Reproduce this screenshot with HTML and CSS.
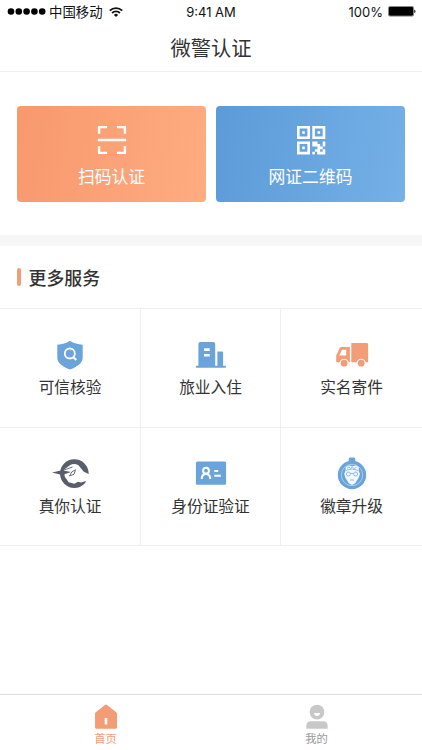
FILE: index.html
```html
<!DOCTYPE html>
<html lang="zh-CN">
<head>
  <meta charset="UTF-8">
  <meta name="viewport" content="width=device-width, initial-scale=1.0">
  <title>微警认证</title>
  <link rel="stylesheet" href="styles.css">
</head>
<body>
  <div class="status-bar">
    <div class="status-left">
      <svg class="signal" width="40" height="8" viewBox="0 0 40 8">
        <circle cx="4" cy="3.5" r="3.3"/><circle cx="11.8" cy="3.5" r="3.3"/><circle cx="19.6" cy="3.5" r="3.3"/><circle cx="27.4" cy="3.5" r="3.3"/><circle cx="35.2" cy="3.5" r="3.3"/>
      </svg>
      <span class="carrier">中国移动</span>
      <svg class="wifi" width="14" height="11" viewBox="0 0 14 11" fill="none" stroke="#111" stroke-width="1.8">
        <path d="M.8 3.6a8.8 8.8 0 0 1 12.4 0M3.1 6a5.5 5.5 0 0 1 7.8 0"/>
        <path d="M7 10 4.9 7.900a3 3 0 0 1 4.200 0z" fill="#111" stroke="none"/>
      </svg>
    </div>
    <div class="status-time">9:41 AM</div>
    <div class="status-right">
      <span>100%</span>
      <svg width="28" height="12" viewBox="0 0 28 12">
        <rect x=".5" y=".5" width="25" height="9.6" rx="1.5" fill="#000" stroke="#888"/>
        <path d="M26.300 3.500c1.600.5 1.600 3.200 0 3.700z"/>
      </svg>
    </div>
  </div>

  <header class="nav-header"><h1>微警认证</h1></header>

  <div class="cards">
    <button class="card card-scan">
      <svg width="30" height="30" viewBox="0 0 30 30" fill="none" stroke="#fff" stroke-width="2.400">
        <path d="M2.100 8.700V2.100h8M19.900 2.100h8v6.600M2.100 21v6.900h8M19.900 27.900h8V21M.8 15h28.400"/>
      </svg>
      <span>扫码认证</span>
    </button>
    <button class="card card-code">
      <svg width="30" height="30" viewBox="0 0 30 30" fill="#fff">
        <path fill-rule="evenodd" d="M1 1h13v13H1zM3.600 3.600v7.800h7.800V3.600zM16.300 1h13v13h-13zM18.900 3.600v7.800h7.800V3.600zM1 16.400h13v13H1zM3.600 19v7.800h7.800V19z"/>
        <path d="M6.200 6.200h2.600v2.600H6.200zM21.500 6.200h2.600v2.600h-2.600zM6.200 21.600h2.600v2.600H6.200z"/>
        <path d="M16.300 16.400h5.200v2.600h2.700v2.500h2.500v-5.100h2.600v5.200h-2.600v2.600h-2.600v2.600h2.600v-2.600h2.600v5.200h-8.100v-2.600h-2.300v-2.600h2.500v-2.600h-5.100z"/>
        <path d="M16.300 26.800h2.600v2.600h-2.600z"/>
      </svg>
      <span>网证二维码</span>
    </button>
  </div>

  <section class="services">
    <h2>更多服务</h2>
    <div class="grid">
      <div class="item">
        <svg width="32" height="32" viewBox="0 0 32 32">
          <path d="M16 1.700c3.800 2.600 7.700 3.500 12.700 4.100v12.400c0 6.200-5.100 9-12.700 12.400C8.400 27.200 3.300 24.400 3.300 18.200V5.800C8.300 5.200 12.200 4.300 16 1.700z" fill="#6ba4da"/>
          <circle cx="15.800" cy="14.500" r="5" fill="none" stroke="#fff" stroke-width="1.800"/>
          <path d="m19.200 18 3 3" stroke="#fff" stroke-width="2"/>
        </svg>
        <span>可信核验</span>
      </div>
      <div class="item">
        <svg width="32" height="32" viewBox="0 0 32 32" fill="#6ba4da">
          <path fill-rule="evenodd" d="M.9 26.700h2.500V4.900q0-1.800 1.800-1.800h13.200q1.800 0 1.800 1.800v21.800h2.200V12.400h4.700q1 0 1 1v13.300h2.700v2H.9zM9 9.300v2.600h5.700V9.300zM9 15v2.600h5.700V15z"/>
        </svg>
        <span>旅业入住</span>
      </div>
      <div class="item">
        <svg width="34" height="32" viewBox="0 0 34 32" fill="#f39c75">
          <path fill-rule="evenodd" d="M16.300 4.100h15.600q1.200 0 1.200 1.200v18h-2.300a4.700 4.700 0 0 0-9.100 0h-5.400zM14.900 8v15.300h-1.200a4.700 4.700 0 0 0-9.100 0H1.200v-6.900L4.600 9.200Q5.200 8 6.400 8zM11.200 10.800H7.100l-2.900 5.800h7z"/>
          <circle cx="9.100" cy="24.200" r="3.400"/><circle cx="26.200" cy="24.200" r="3.400"/>
        </svg>
        <span>实名寄件</span>
      </div>
      <div class="item">
        <svg width="38" height="32" viewBox="0 0 38 32">
          <circle cx="23.300" cy="15.600" r="14.300" fill="#5a5e6c"/>
          <!-- hand reaching in over the disc -->
          <path d="M12.800 11.800 19.300 7q3.700-2.200 8.200.2l5 6.300 5.900 3-1 7.300-3.400-.6-3.900 1.400-3-.9-3.800 2.100-5.600-1.600-3.900-5.500z" fill="#fff"/>
          <path d="M1 14.500 11 12.200 20 13.900 11 16.900z" fill="#5a5e6c"/>
          <path d="M12 12.400 21.500 9M18.500 18l4.500-1.700 1.500-4.500-3.600 2z" fill="none" stroke="#5a5e6c" stroke-width=".9"/>
        </svg>
        <span>真你认证</span>
      </div>
      <div class="item">
        <svg width="32" height="32" viewBox="0 0 32 32">
          <rect x=".9" y="3.600" width="30.200" height="23.200" rx="1.500" fill="#6ba4da"/>
          <g fill="none" stroke="#fff" stroke-width="2">
            <circle cx="11" cy="12.700" r="2.900"/>
            <path d="M6.700 21q.1-5.100 4.300-5.100t4.300 5.100M19.300 13.100h3.900M19.300 17.700h6.600"/>
          </g>
        </svg>
        <span>身份证验证</span>
      </div>
      <div class="item">
        <svg width="32" height="34" viewBox="0 0 32 34">
          <rect x="12.700" y=".6" width="6.600" height="6" rx="1.500" fill="#6ba4da"/>
          <circle cx="16" cy="18" r="14.200" fill="#6ba4da"/>
          <circle cx="16" cy="18" r="10.700" fill="none" stroke="#b7d5ef" stroke-width=".8"/>
          <path d="M9.700 10 13 8.600l3 .7 4-.8 2.800 1.700v4.300l1.200 2.300-1.300 4-3.500 5.400-3.200 1.700-3.200-1.700-3.400-5.400-1.200-4 1.100-2.300z" fill="#f2f8fc"/>
          <g fill="none" stroke="#85b5e2" stroke-width=".9">
            <path d="M9.500 13.400q6.500-2.800 13 0M11 11.400l2-1.500 1.300 1.700 2-1.600 1.800 1.700 2.400-1.500M14.800 16.500h2.400M14 23h4"/>
            <circle cx="12.400" cy="17" r="2"/><circle cx="19.600" cy="17" r="2"/>
          </g>
        </svg>
        <span>徽章升级</span>
      </div>
    </div>
  </section>

  <nav class="tab-bar">
    <a class="tab active">
      <svg width="24" height="26" viewBox="0 0 24 26" fill="currentColor">
        <path fill-rule="evenodd" d="M10.900 1q1.100-.8 2.200 0l9.100 7.200q.8.700.8 1.600v13.400q0 1.500-1.500 1.500h-19Q1 24.700 1 23.200V9.800q0-.9.800-1.600zM10.700 14v6.500h2.600V14z"/>
      </svg>
      <span>首页</span>
    </a>
    <a class="tab">
      <svg width="24" height="26" viewBox="0 0 24 26" fill="#c8c8c8">
        <circle cx="12" cy="8.100" r="7.400"/>
        <path d="M8.900 8.900h6.200q-.5 3-3.100 3t-3.100-3z" fill="#fff"/>
        <path d="M1.300 24.700v-2.800q0-4.700 4.700-4.700h12q4.700 0 4.700 4.700v2.800z"/>
      </svg>
      <span>我的</span>
    </a>
  </nav>
</body>
</html>
```

FILE: styles.css
```css
* {
  box-sizing: border-box;
  margin: 0;
  padding: 0;
}

body {
  display: flex;
  flex-direction: column;
  height: 100vh;
  overflow: hidden;
  background-color: #fff;
  color: #333;
  font-family: Inter, "Noto Sans CJK SC", sans-serif;
}

svg {
  display: block;
  flex-shrink: 0;
}

.status-bar {
  display: grid;
  grid-template-columns: 1fr auto 1fr;
  align-items: center;
  height: 24px;
  padding: 0 6px 0 7px;
  font-size: 13px;
  color: #111;
}

.status-left,
.status-right {
  display: flex;
  align-items: center;
}

.status-time {
  margin-right: 1px;
}

.carrier {
  margin: 0 6px 0 2px;
  font-size: 13.4px;
  line-height: 20px;
}

.status-right {
  justify-content: flex-end;
  gap: 5px;
}

.nav-header {
  height: 48px;
  border-bottom: 1px solid #efefef;
  text-align: center;
}

.nav-header h1 {
  font-size: 20.3px;
  font-weight: 400;
  line-height: 49px;
}

.cards {
  display: flex;
  gap: 10px;
  height: 163px;
  padding: 34px 17px;
}

.card {
  display: flex;
  flex: 1;
  flex-direction: column;
  align-items: center;
  gap: 10px;
  height: 95.5px;
  padding-top: 19px;
  border: none;
  border-radius: 4px;
  color: #fff;
  font-family: inherit;
  font-size: 16.8px;
  line-height: 24px;
}

.card-scan {
  background: linear-gradient(100deg, #f8986e, #feac80);
}

.card-code {
  background: linear-gradient(100deg, #5c9bd8, #75b0e7);
}

.services {
  border-top: 11px solid #f6f6f6;
}

.services h2 {
  display: flex;
  align-items: center;
  gap: 7.5px;
  height: 62px;
  padding: 0 17px;
  font-size: 17.9px;
  font-weight: 500;
}

.services h2::before {
  content: "";
  width: 4px;
  height: 18px;
  border-radius: 2px;
  background-color: #f39c75;
}

.grid {
  display: grid;
  grid-template-columns: 141px 140px 141px;
  grid-template-rows: 119px 118px;
  border-top: 1px solid #efefef;
}

.item {
  display: flex;
  flex-direction: column;
  align-items: center;
  padding-top: 29px;
  border-right: 1px solid #efefef;
  border-bottom: 1px solid #efefef;
  font-size: 15.7px;
  line-height: 24px;
}

.item:nth-child(3n) {
  border-right: none;
}

.item svg {
  height: 34px;
  margin-bottom: 4px;
}

.tab-bar {
  display: flex;
  height: 56px;
  margin-top: auto;
  border-top: 1px solid #dedede;
}

.tab {
  display: flex;
  flex: 1;
  flex-direction: column;
  align-items: center;
  padding-top: 9px;
  color: #999;
  font-size: 11.3px;
  line-height: 18px;
}

.tab.active {
  color: #f39c75;
}
```
